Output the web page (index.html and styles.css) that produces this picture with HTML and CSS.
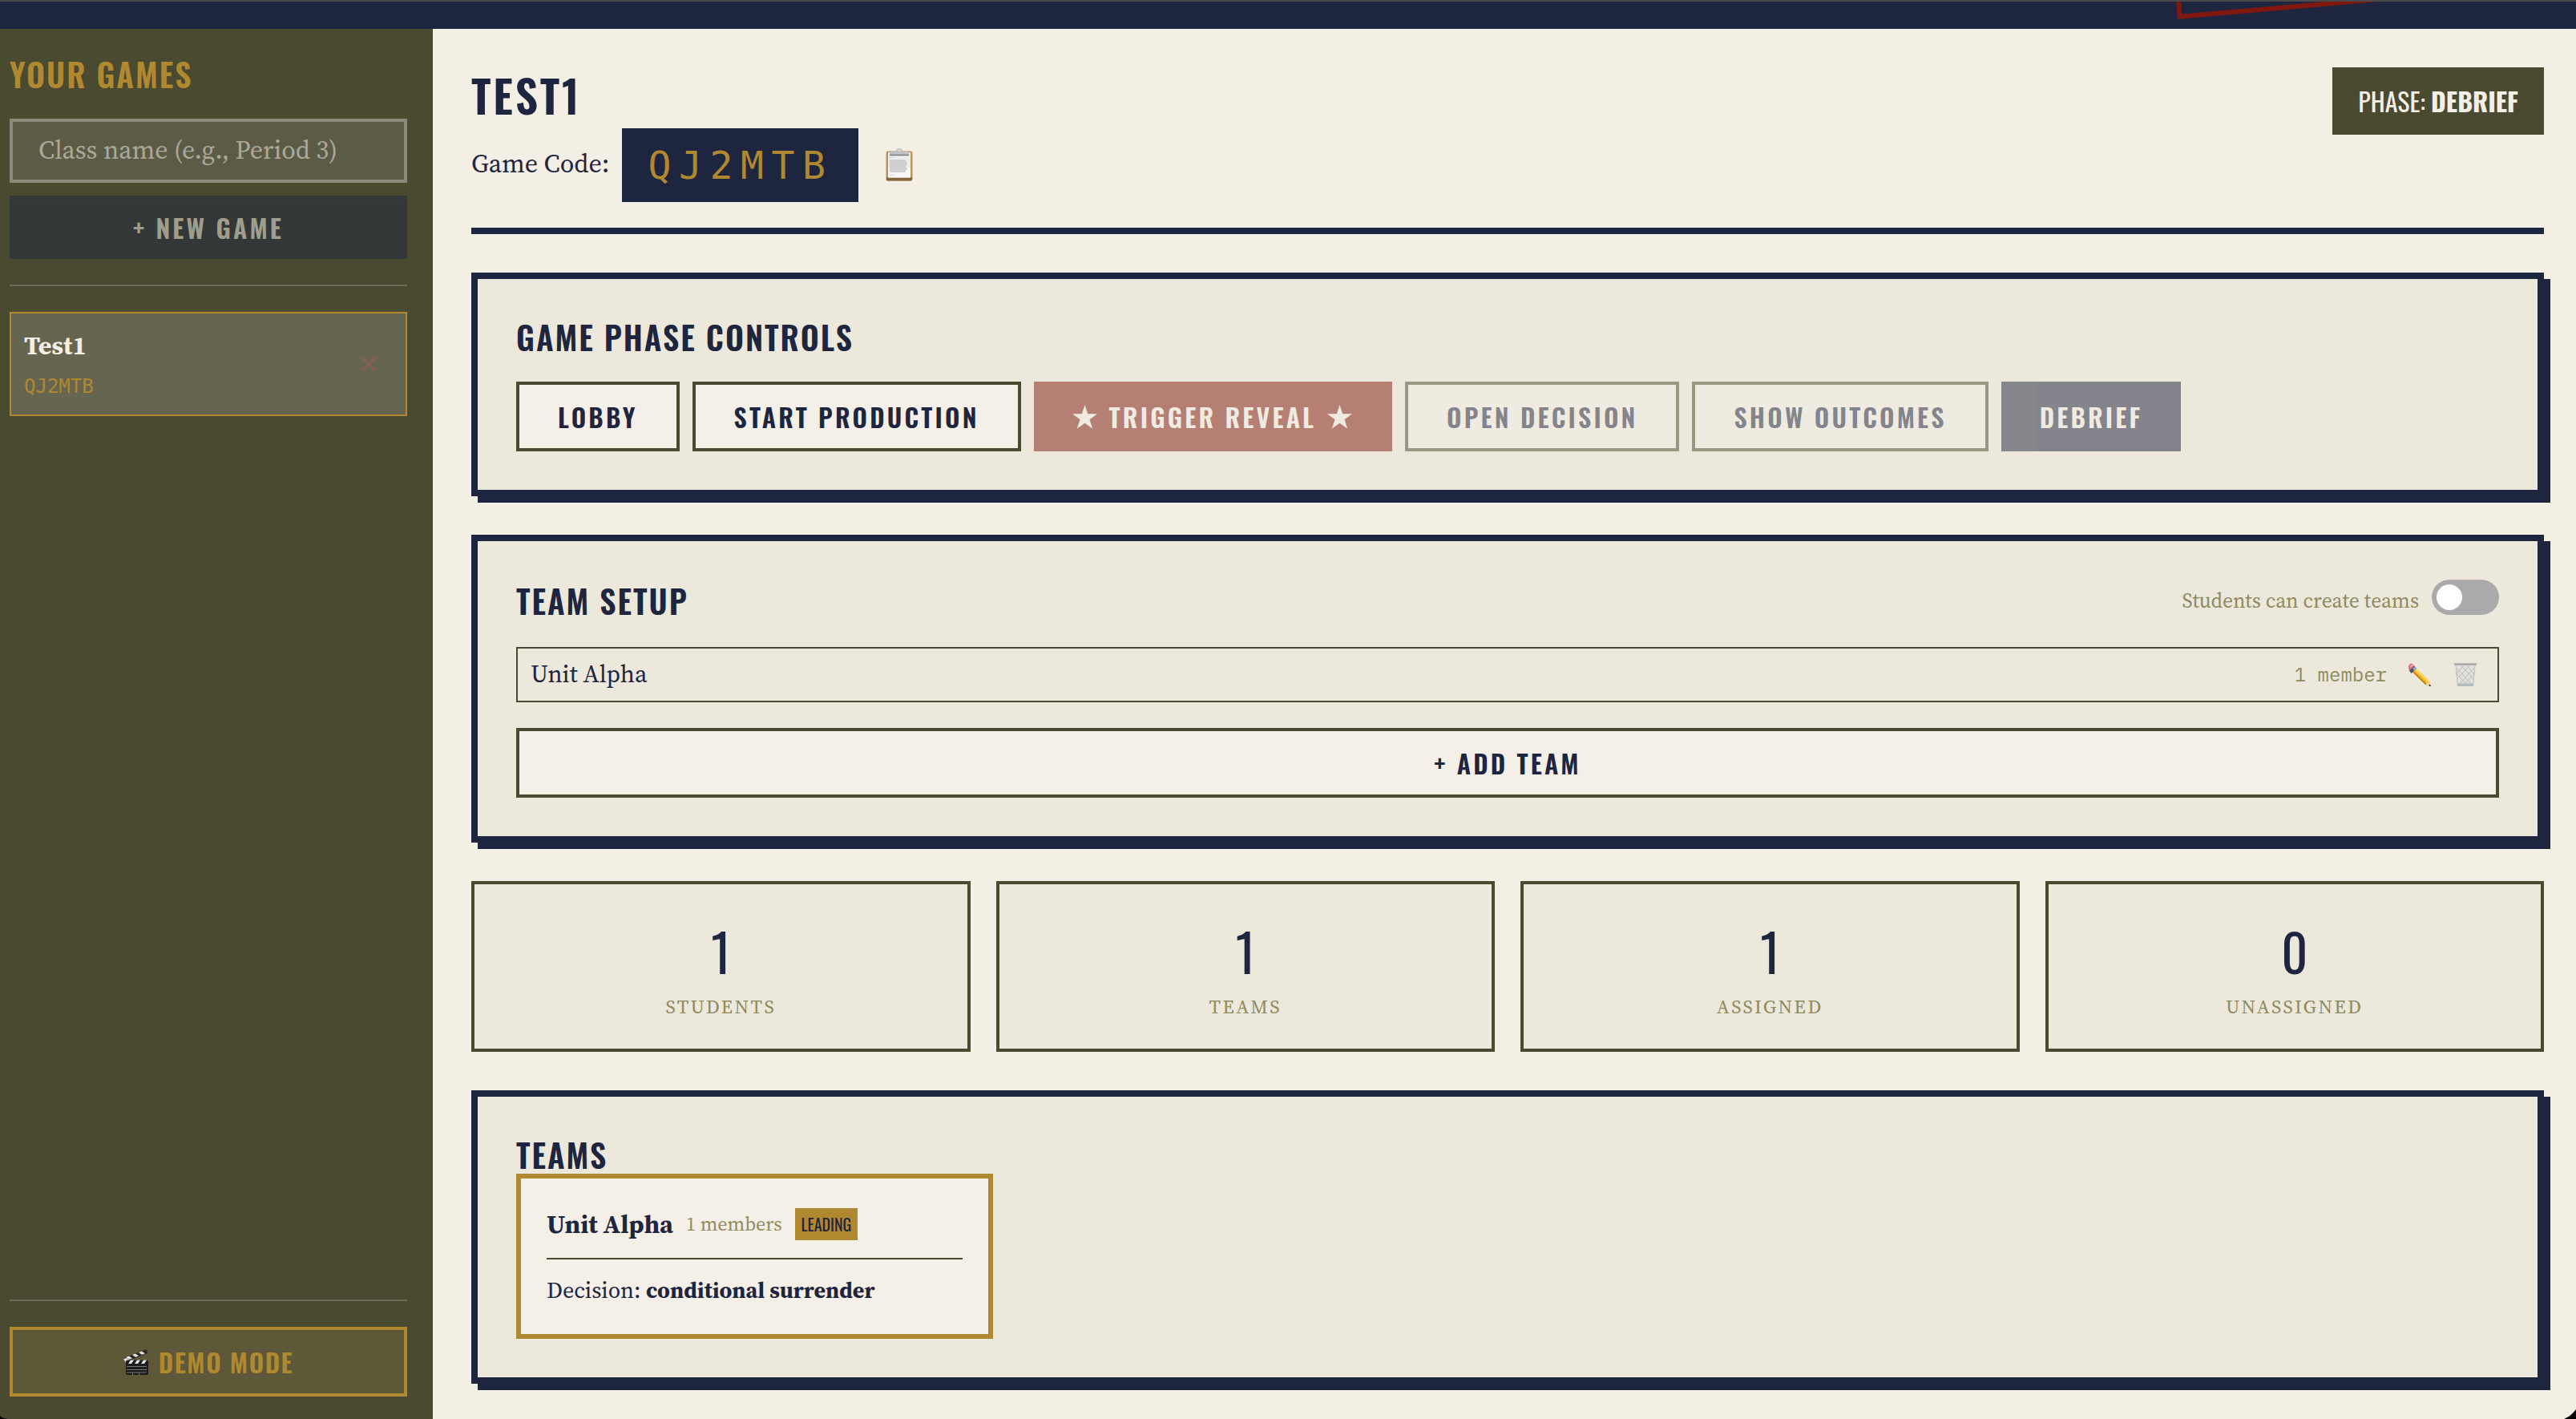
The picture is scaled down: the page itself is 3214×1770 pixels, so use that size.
FILE: index.html
```
<!DOCTYPE html>
<html lang="en">
<head>
  <meta charset="UTF-8">
  <meta name="viewport" content="width=device-width, initial-scale=1.0">
  <title>Teacher Dashboard</title>

  <link rel="stylesheet" href="styles.css">
</head>
<body>
  <header class="topbar">
    <div class="stamp"></div>
  </header>

  <div class="layout">
    <aside class="sidebar">
      <h2 class="sidebar-title">Your Games</h2>
      <input class="class-input" type="text" placeholder="Class name (e.g., Period 3)">
      <button class="btn btn-new" disabled>+ New Game</button>

      <div class="game-list">
        <div class="game-item">
          <div>
            <div class="game-name">Test1</div>
            <div class="game-code-small">QJ2MTB</div>
          </div>
          <button class="icon-btn delete-game" aria-label="Delete game">
            <svg width="20" height="20" viewBox="0 0 20 20"><path d="M1.500 1.500l17 17M18.500 1.500l-17 17" stroke="#855f50" stroke-width="3.600"/></svg>
          </button>
        </div>
      </div>

      <div class="sidebar-footer">
        <button class="btn btn-demo">
          <svg class="clapper" width="32" height="32" viewBox="0 0 32 32">
            <path d="M0 11L29 0l1 5L4 15z" fill="#2b2b2b"/>
            <path d="M3 10l4-1.500 4 2.800-4 1.500zM11 7l4-1.600 4 2.800-4 1.500zM19 4l4-1.600 4 2.800-4 1.500zM0 12l4-1 4 3-4 4z" fill="#e4e4e4"/>
            <rect x="3" y="13.500" width="28" height="18.500" rx="2" fill="#1c1c1e"/>
            <path d="M6 18l3-4.500h4l-3 4.500zM14 18l3-4.500h4l-3 4.500zM22 18l3-4.500h4l-3 4.500z" fill="#e4e4e4"/>
            <path d="M4 21.500h25M4 25.500h25M4 29h25M11.500 29v3M19.500 29v3" stroke="#77777a" stroke-width="1"/>
          </svg>
          Demo Mode
        </button>
      </div>
    </aside>

    <main class="main">
      <div class="game-header">
        <div>
          <h1>Test1</h1>
          <div class="code-row">
            <span class="code-label">Game Code:</span>
            <span class="game-code">QJ2MTB</span>
            <button class="icon-btn copy-btn" aria-label="Copy code">
              <svg width="34" height="41" viewBox="0 0 34 41">
                <rect x="0.500" y="3.500" width="33" height="37" rx="2.500" fill="#bb945d"/>
                <path d="M1 36h32v2.500a2 2 0 0 1-2 2H3a2 2 0 0 1-2-2z" fill="#86643a"/>
                <rect x="3" y="5" width="28" height="31.500" fill="#ececec"/>
                <path d="M3 24h28v12.500H3z" fill="#f7f7f7"/>
                <path d="M5 14h19l3 4-2 5 2 3-3 4H5z" fill="#cfcfcf"/>
                <path d="M5 11.500h5M5 33h6" stroke="#d2d2d2" stroke-width="1"/>
                <path d="M5 9V6q0-2 2-2h20q2 0 2 2v3z" fill="#bfc3c8"/>
                <path d="M5 8.500h24" stroke="#777b80" stroke-width="1.500"/>
                <path d="M13.500 4.500q.5-3.500 3.500-3.500t3.500 3.500" fill="none" stroke="#b3bcc6" stroke-width="1.600"/>
              </svg>
            </button>
          </div>
        </div>
        <div class="phase-badge">Phase: <strong>Debrief</strong></div>
      </div>

      <section class="card">
        <h2>Game Phase Controls</h2>
        <div class="phase-buttons">
          <button class="btn btn-outline">Lobby</button>
          <button class="btn btn-outline">Start Production</button>
          <button class="btn btn-reveal" disabled><svg width="31" height="30" viewBox="0 0 31 30"><path d="M15.500 0l3.700 11.300H31l-9.500 7 3.700 11.400-9.700-7-9.700 7 3.700-11.400L0 11.300h11.800z" fill="#f4efe6"/></svg><span>Trigger Reveal</span><svg width="31" height="30" viewBox="0 0 31 30"><path d="M15.500 0l3.700 11.300H31l-9.500 7 3.700 11.400-9.700-7-9.700 7 3.700-11.400L0 11.300h11.800z" fill="#f4efe6"/></svg></button>
          <button class="btn btn-outline" disabled>Open Decision</button>
          <button class="btn btn-outline" disabled>Show Outcomes</button>
          <button class="btn btn-primary" disabled>Debrief</button>
        </div>
      </section>

      <section class="card">
        <div class="setup-header">
          <h2>Team Setup</h2>
          <div class="toggle-row">
            <span>Students can create teams</span>
            <div class="switch"></div>
          </div>
        </div>

        <div class="team-row">
          <span class="team-row-name">Unit Alpha</span>
          <span class="member-count">1 member</span>
          <button class="icon-btn edit-btn" aria-label="Rename team">
            <svg width="30" height="30" viewBox="0 0 30 30">
              <path d="M7.500 4L27.500 23l1.500 6-6.500-1.500L3.500 8.500z" fill="#efb92a"/>
              <path d="M9.500 6L27.500 23l-1.500 1.500L7.500 7.500z" fill="#ffd655"/>
              <path d="M4 9.500L5.500 8 24 26l-1.500 1.500z" fill="#c98612"/>
              <path d="M27.500 23l1.500 6-6.500-1.500 1-3z" fill="#efd2a2"/>
              <path d="M27.500 26.500l1.700 2.700-3-.8z" fill="#222"/>
              <path d="M8 3.500l3 3-6.500 6.500-3-4z" fill="#45536b"/>
              <path d="M9 4.500l2 2-3 3-2-2.500z" fill="#8ea6cc"/>
              <path d="M1 4.500Q.8 2 4 .8 6.500.3 8 3.500L2.500 9.500Q.8 7 1 4.500z" fill="#dd6f74"/>
              <path d="M3 3l3-1.500 1 1.500-3.500 3z" fill="#eda7a7"/>
            </svg>
          </button>
          <button class="icon-btn trash-btn" aria-label="Delete team">
            <svg width="28" height="30" viewBox="0 0 28 30">
              <path d="M1.500 2h25L24 29H4z" fill="#e2e1de"/>
              <path d="M3 6l20 22M2 12l15 17M8 2l17 19M15 2l10 12M25 6L5 28M26 12L11 29M20 2L3 21M13 2L2 14" stroke="#babbba" stroke-width="1"/>
              <path d="M4 25.500h20L23.700 29H4.300z" fill="#b4bbc0"/>
              <path d="M0 .5h28v2H0z" fill="#9b9d9f"/>
              <path d="M2 3L4.500 29M26 3l-2.500 26" stroke="#c2c3c4" stroke-width="1.200"/>
            </svg>
          </button>
        </div>

        <button class="btn btn-outline btn-block">+ Add Team</button>
      </section>

      <div class="stats">
        <div class="stat">
          <div class="stat-value">1</div>
          <div class="stat-label">Students</div>
        </div>
        <div class="stat">
          <div class="stat-value">1</div>
          <div class="stat-label">Teams</div>
        </div>
        <div class="stat">
          <div class="stat-value">1</div>
          <div class="stat-label">Assigned</div>
        </div>
        <div class="stat">
          <div class="stat-value">0</div>
          <div class="stat-label">Unassigned</div>
        </div>
      </div>

      <section class="card teams-card">
        <h2>Teams</h2>
        <div class="team-grid">
          <div class="team">
            <div class="team-head">
              <strong>Unit Alpha</strong>
              <span class="team-size">1 members</span>
              <span class="leading">Leading</span>
            </div>
            <div class="decision">Decision: <strong>conditional surrender</strong></div>
          </div>
        </div>
      </section>
    </main>
  </div>

  <div class="corner corner-left"></div>
  <div class="corner corner-right"></div>
</body>
</html>
```
FILE: styles.css
```
:root {
  --navy: #1e253f;
  --olive: #4a4a31;
  --gold: #b08830;
  --khaki: #8f8b5e;
  --red: #80180f;
  --paper: #f4efe6;
  --page: #f3efe5;
  --card: #ece8db;
  --display: Oswald, 'Open Sans Condensed', 'Roboto Condensed', sans-serif;
  --serif: 'Source Serif 4', 'Noto Serif', 'Liberation Serif', serif;
  --mono: 'IBM Plex Mono', 'Liberation Mono', monospace;
  --code: 'DejaVu Sans Mono', 'Liberation Mono', monospace;
}

* {
  box-sizing: border-box;
}

html {
  font-size: 32px;
}

body {
  display: flex;
  flex-direction: column;
  position: relative;
  margin: 0;
  height: 100vh;
  overflow: hidden;
  background: var(--page);
  color: var(--navy);
  font-family: var(--serif);
  line-height: 1.6;
}

h1, h2 {
  margin: 0;
  font-family: var(--display);
  font-weight: 600;
  line-height: 1.2;
  letter-spacing: 0.05em;
  text-transform: uppercase;
}

h1 {
  font-size: 1.75rem;
}

h2 {
  font-size: 1.25rem;
}

.topbar {
  position: relative;
  flex: none;
  height: 36px;
  border-top: 2px solid #4a4a4a;
  background: var(--navy);
  overflow: hidden;
}

.stamp {
  position: absolute;
  left: 2717px;
  bottom: 12px;
  width: 420px;
  height: 80px;
  border: 6px solid var(--red);
  transform: rotate(-5deg);
  transform-origin: 0 100%;
}

.layout {
  display: flex;
  flex: 1;
  min-height: 0;
}

/* sidebar */

.sidebar {
  display: flex;
  flex-direction: column;
  flex: none;
  width: 540px;
  padding: 1rem 1rem 28px 12px;
  background: var(--olive);
}

.sidebar-title {
  margin-bottom: 1rem;
  color: var(--gold);
}

.class-input {
  flex: none;
  width: 100%;
  height: 80px;
  margin-bottom: 0.5rem;
  padding: 0 1rem 2px;
  border: 4px solid #8b8b7a;
  border-radius: 0;
  background: #5c5b45;
  font-family: var(--serif);
  font-size: 1rem;
}

.class-input::placeholder {
  color: #a9a89b;
}

.btn {
  padding: 0.5rem 1.5rem;
  border: 0;
  font-family: var(--display);
  font-size: 1rem;
  font-weight: 600;
  letter-spacing: 0.1em;
  text-transform: uppercase;
  color: var(--navy);
}

.btn:disabled {
  opacity: 0.5;
}

.btn-new,
.btn-primary {
  background: var(--navy);
  color: var(--paper);
}

.game-list {
  margin-top: 1rem;
  padding-top: 1rem;
  border-top: 2px solid #6e6d59;
}

.game-item {
  display: flex;
  align-items: center;
  justify-content: space-between;
  height: 130px;
  padding: 0 36px 0 0.5rem;
  border: 2px solid var(--gold);
  background: #666550;
}

.game-name {
  font-weight: 700;
  color: var(--paper);
}

.game-code-small {
  margin-top: 6px;
  font-family: var(--code);
  font-size: 0.75rem;
  color: var(--gold);
}

.icon-btn {
  display: flex;
  padding: 0;
  border: 0;
  background: none;
}

.sidebar-footer {
  margin-top: auto;
  padding-top: 1rem;
  border-top: 2px solid #6e6d59;
}

.btn-demo {
  display: flex;
  align-items: center;
  justify-content: center;
  gap: 12px;
  width: 100%;
  border: 4px solid var(--gold);
  background: #5d5837;
  color: var(--gold);
  letter-spacing: 0.05em;
}

/* main column */

.main {
  flex: 1;
  min-width: 0;
  padding: 1.5rem 40px 0 48px;
}

.game-header {
  display: flex;
  align-items: flex-start;
  justify-content: space-between;
  height: 208px;
  margin-bottom: 1.5rem;
  border-bottom: 8px solid var(--navy);
}

.code-row {
  display: flex;
  align-items: center;
  margin-top: 9px;
}

.code-label {
  padding-bottom: 4px;
}

.game-code {
  height: 92px;
  margin-left: 16px;
  padding: 0 1rem;
  background: var(--navy);
  color: var(--gold);
  font-family: var(--code);
  font-size: 1.5rem;
  line-height: 92px;
  letter-spacing: 0.2em;
}

.copy-btn {
  margin-left: 34px;
  padding-bottom: 2px;
}

.phase-badge {
  height: 84px;
  padding: 0.5rem 1rem;
  background: var(--olive);
  color: var(--paper);
  font-family: var(--display);
  text-transform: uppercase;
}

.card {
  margin-bottom: 1.5rem;
  padding: 1.5rem;
  border: 8px solid var(--navy);
  background: var(--card);
  box-shadow: 8px 8px 0 var(--navy);
}

.phase-buttons {
  display: flex;
  gap: 0.5rem;
  margin-top: 1rem;
}

.btn-outline {
  border: 4px solid var(--olive);
  background: #f4efe7;
}

.btn-reveal {
  display: flex;
  align-items: center;
  gap: 14px;
  padding-right: 50px;
  background: var(--red);
  color: var(--paper);
}

.btn-reveal span {
  margin-left: 1px;
}

.btn-block {
  display: block;
  width: 100%;
}

.setup-header {
  display: flex;
  align-items: center;
  justify-content: space-between;
  height: 52px;
  margin-bottom: 1rem;
}

.toggle-row {
  display: flex;
  align-items: center;
  gap: 16px;
  color: var(--khaki);
  font-size: 0.8rem;
}

.switch {
  width: 84px;
  height: 44px;
  margin-bottom: 8px;
  padding: 6px;
  border-radius: 22px;
  background: #aaa;
}

.switch::before {
  content: '';
  display: block;
  width: 32px;
  height: 32px;
  border-radius: 50%;
  background: #fff;
}

.team-row {
  display: flex;
  align-items: center;
  height: 69px;
  margin-bottom: 1rem;
  padding: 0 26px 0 0.5rem;
  border: 2px solid var(--olive);
}

.team-row-name {
  flex: 1;
  font-size: 0.95rem;
}

.member-count {
  color: var(--khaki);
  font-family: var(--mono);
  font-size: 0.75rem;
}

.edit-btn {
  margin-left: 26px;
}

.trash-btn {
  margin-left: 28px;
}

.stats {
  display: grid;
  grid-template-columns: repeat(4, 1fr);
  gap: 1rem;
  margin-bottom: 1.5rem;
}

.stat {
  padding: 1rem;
  border: 4px solid var(--olive);
  background: var(--card);
  text-align: center;
}

.stat-value {
  font-family: var(--display);
  font-size: 2rem;
}

.stat-label {
  color: var(--khaki);
  font-size: 0.75rem;
  letter-spacing: 0.1em;
  text-transform: uppercase;
}

.team-grid {
  display: grid;
  grid-template-columns: repeat(4, 1fr);
  gap: 1rem;
}

.team {
  padding: 1rem;
  border: 6px solid var(--gold);
  background: #f4efe7;
}

.team-head {
  display: flex;
  align-items: center;
  gap: 0.5rem;
  padding-bottom: 0.5rem;
  margin-bottom: 0.5rem;
  border-bottom: 2px solid var(--olive);
}

.team-size {
  color: var(--khaki);
  font-size: 0.75rem;
}

.leading {
  padding: 4px 8px;
  background: var(--gold);
  font-family: var(--display);
  font-size: 20px;
  text-transform: uppercase;
}

.decision {
  font-size: 28px;
}

/* rounded window corners */

.corner {
  position: absolute;
  bottom: 0;
}

.corner-left {
  width: 9px;
  height: 4px;
  background: #000;
  clip-path: polygon(0 0, 35% 60%, 100% 100%, 0 100%);
}

.corner-right {
  right: 0;
  width: 15px;
  height: 12px;
  background: #000;
  clip-path: polygon(100% 0, 75% 35%, 45% 70%, 0 100%, 100% 100%);
}
```
